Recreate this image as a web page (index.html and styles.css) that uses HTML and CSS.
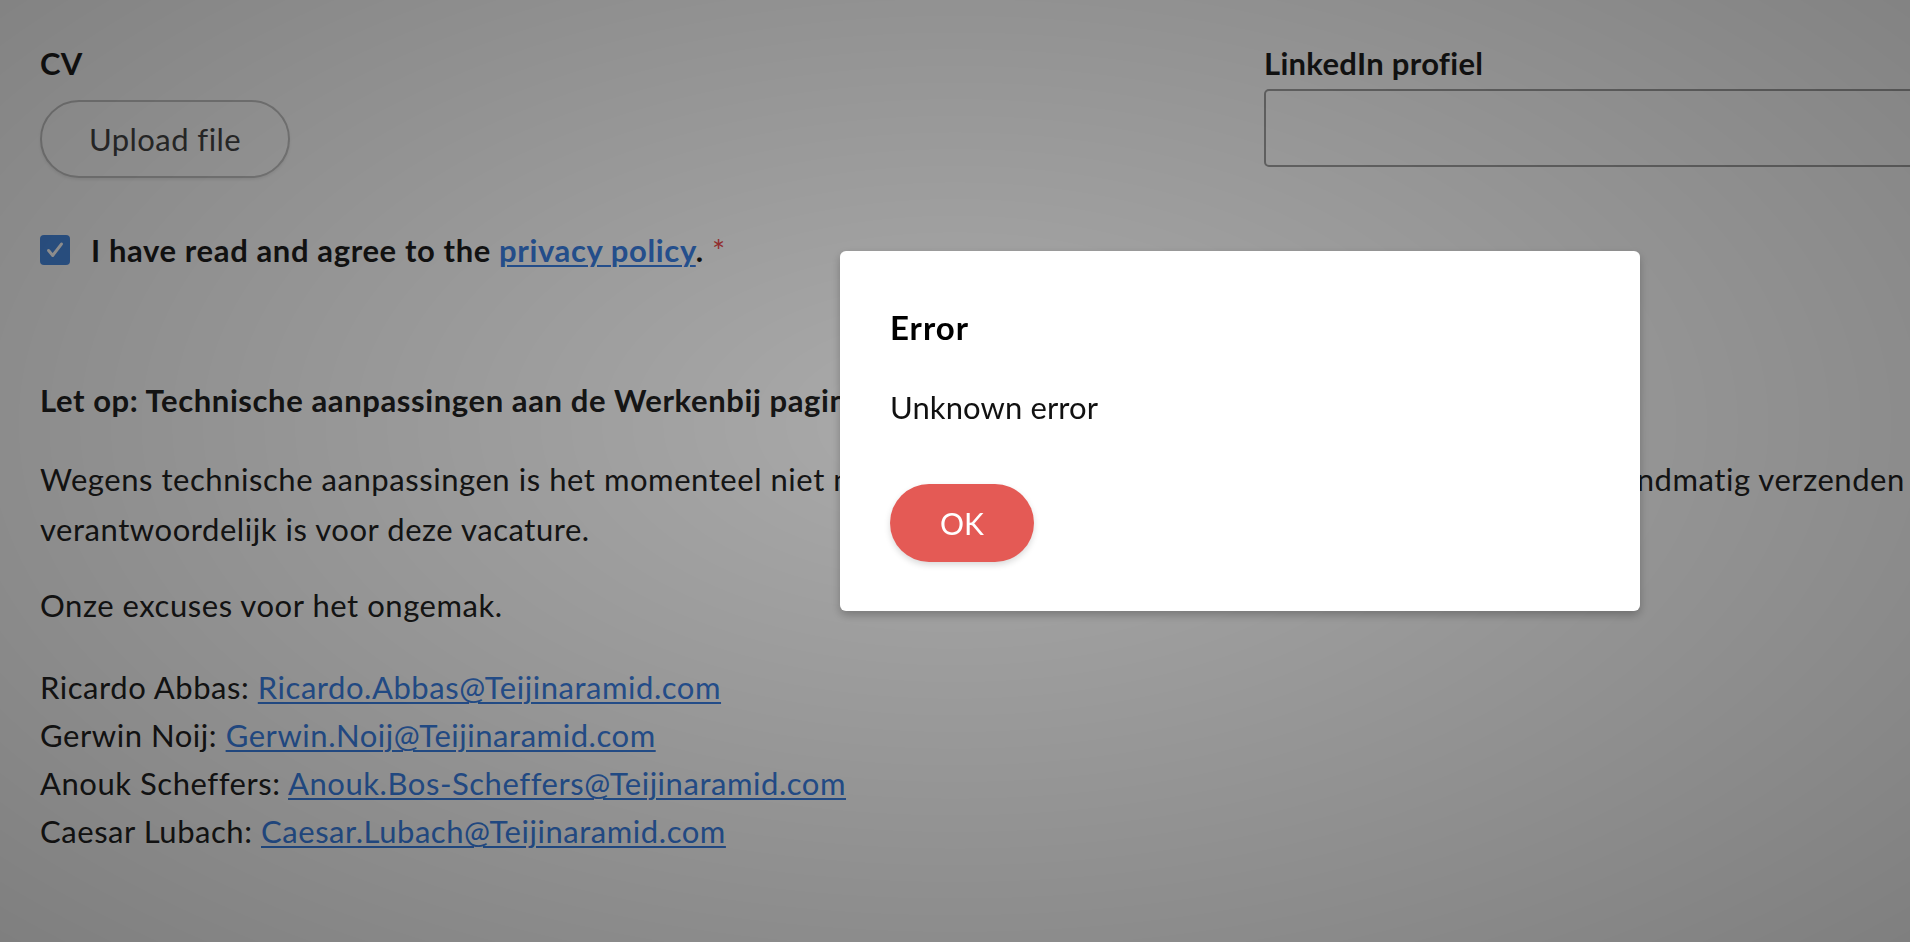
FILE: index.html
```html
<!DOCTYPE html>
<html lang="nl">
<head>
<meta charset="utf-8">
<title>Werkenbij - Solliciteren</title>
<link rel="stylesheet" href="styles.css">
</head>
<body>
<div class="page">
  <div class="form-grid">
    <div class="field">
      <label class="label">CV</label>
      <button class="upload-btn" type="button">Upload file</button>
    </div>
    <div class="field">
      <label class="label">LinkedIn profiel</label>
      <input class="text-input" type="text">
    </div>
  </div>

  <div class="consent">
    <span class="checkbox">
      <svg viewBox="0 0 24 24" width="22" height="22"><path d="M5 12.5l4.5 5.5L19 5.5" fill="none" stroke="#fff" stroke-width="3.2" stroke-linecap="round" stroke-linejoin="round"/></svg>
    </span>
    <span class="consent-text">I have read and agree to the <a class="link" href="#">privacy policy</a>. <span class="req">*</span></span>
  </div>

  <div class="notice">
    <p class="notice-title">Let op: Technische aanpassingen aan de Werkenbij pagina's</p>
    <p class="notice-text">Wegens technische aanpassingen is het momenteel niet mogelijk om online te solliciteren. U kunt je sollicitatie handmatig verzenden naar de recruiter die<br>verantwoordelijk is voor deze vacature.</p>
    <p class="notice-text">Onze excuses voor het ongemak.</p>
    <ul class="contacts">
      <li>Ricardo Abbas: <a class="link" href="#">Ricardo.Abbas@Teijinaramid.com</a></li>
      <li>Gerwin Noij: <a class="link" href="#">Gerwin.Noij@Teijinaramid.com</a></li>
      <li>Anouk Scheffers: <a class="link" href="#">Anouk.Bos-Scheffers@Teijinaramid.com</a></li>
      <li>Caesar Lubach: <a class="link" href="#">Caesar.Lubach@Teijinaramid.com</a></li>
    </ul>
  </div>
</div>

<div class="overlay">
  <div class="modal" role="dialog">
    <h2 class="modal-title">Error</h2>
    <p class="modal-text">Unknown error</p>
    <button class="ok-btn" type="button">OK</button>
  </div>
</div>
</body>
</html>
```

FILE: styles.css
```css
html, body {
  margin: 0;
  padding: 0;
  overflow: hidden;
  background: #ffffff;
}

body {
  width: 1910px;
  height: 942px;
  font-family: "Lato", "Liberation Sans", sans-serif;
  color: #222222;
}

.page {
  width: 2500px;
  padding: 42px 0 0 40px;
}

.form-grid {
  display: grid;
  grid-template-columns: 1184px 1184px;
  column-gap: 40px;
  align-items: start;
}

.field {
  display: flex;
  flex-direction: column;
  align-items: flex-start;
}

.label {
  font-size: 31px;
  font-weight: 700;
  letter-spacing: 0.3px;
  line-height: 42px;
  color: #1e1e1e;
}

.upload-btn {
  margin-top: 16px;
  width: 250px;
  height: 78px;
  border: 2px solid #c4c4c4;
  border-radius: 39px;
  background: #ffffff;
  box-shadow: 0 2px 3px rgba(0,0,0,0.08);
  font-family: inherit;
  font-size: 31px;
  letter-spacing: 0.45px;
  color: #444444;
  padding: 0;
}

.text-input {
  margin-top: 5px;
  width: 100%;
  height: 78px;
  box-sizing: border-box;
  border: 2px solid #a0a0a0;
  border-radius: 5px;
  background: #ffffff;
}

.consent {
  margin-top: 47px;
  display: flex;
  align-items: center;
  gap: 21px;
  height: 50px;
}

.checkbox {
  width: 30px;
  height: 30px;
  border-radius: 4px;
  background: #4a8ce4;
  display: flex;
  align-items: center;
  justify-content: center;
  flex: none;
}

.consent-text {
  font-size: 31px;
  font-weight: 700;
  letter-spacing: 0.62px;
  line-height: 50px;
  color: #1e1e1e;
}

.link {
  color: #3b80e4;
  text-decoration: underline;
  text-decoration-thickness: 2px;
  text-underline-offset: 3px;
  font-weight: inherit;
}

.req {
  color: #ea4a4a;
  font-weight: 400;
}

.notice {
  margin-top: 100px;
}

.notice-title {
  margin: 0;
  font-size: 31px;
  font-weight: 700;
  letter-spacing: 0.6px;
  line-height: 50px;
  white-space: nowrap;
}

.notice-text {
  margin: 29px 0 0 0;
  font-size: 31px;
  letter-spacing: 0.55px;
  line-height: 50px;
  white-space: nowrap;
}

.notice-text + .notice-text {
  margin-top: 26px;
}

.contacts {
  list-style: none;
  margin: 33px 0 0 0;
  padding: 0;
  font-size: 31px;
  letter-spacing: 0.55px;
  line-height: 48px;
}

.overlay {
  position: fixed;
  inset: 0;
  background: radial-gradient(ellipse farthest-corner at 50% 45%, rgba(0,0,0,0.33) 0%, rgba(0,0,0,0.5) 100%);
}

.modal {
  position: absolute;
  left: 840px;
  top: 251px;
  width: 800px;
  box-sizing: border-box;
  padding: 50px 50px 49px 50px;
  background: #ffffff;
  border-radius: 6px;
  box-shadow: 0 4px 10px rgba(0,0,0,0.25);
}

.modal-title {
  margin: 0;
  font-size: 33px;
  font-weight: 700;
  letter-spacing: 1px;
  line-height: 52px;
  color: #000000;
}

.modal-text {
  margin: 30px 0 0 0;
  font-size: 31px;
  letter-spacing: 0.1px;
  line-height: 48px;
  color: #111111;
}

.ok-btn {
  margin-top: 53px;
  width: 144px;
  height: 78px;
  border: none;
  border-radius: 39px;
  background: #e45a55;
  color: #ffffff;
  font-family: inherit;
  font-size: 30px;
  padding: 0;
  box-shadow: 0 3px 6px rgba(0,0,0,0.15);
}
```
